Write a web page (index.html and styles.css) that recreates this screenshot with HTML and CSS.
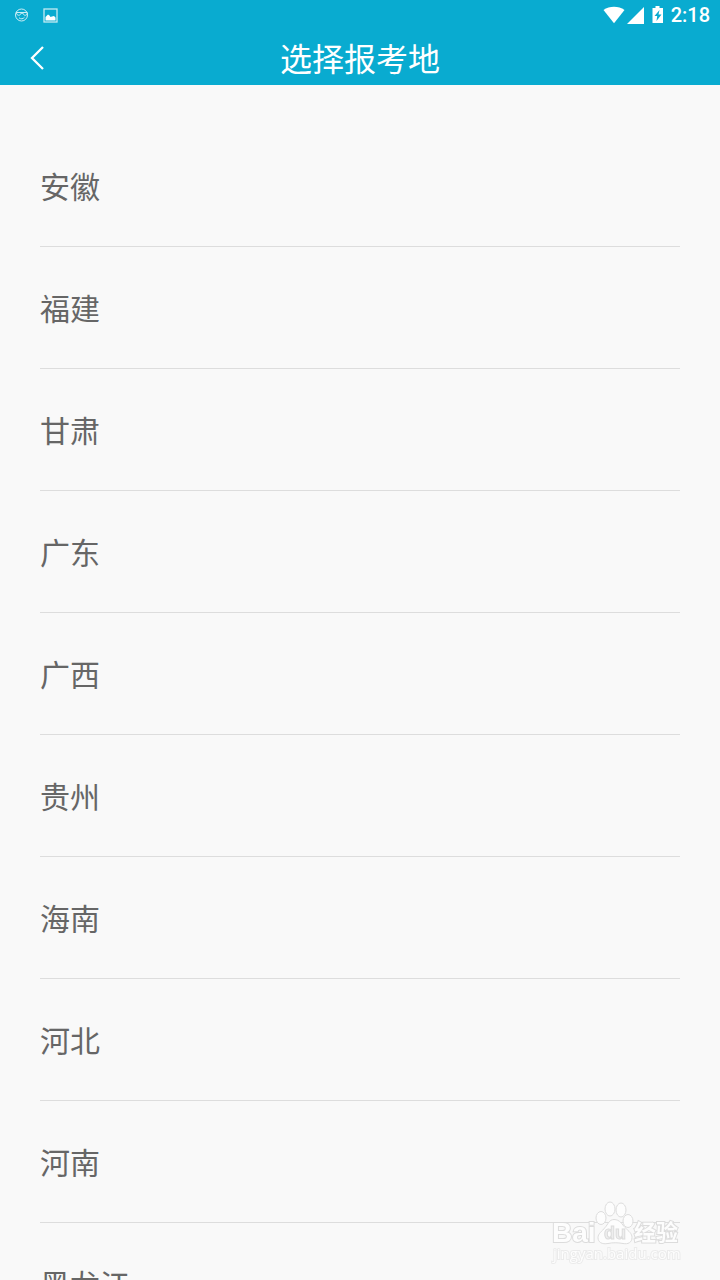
FILE: index.html
```html
<!DOCTYPE html>
<html lang="zh-CN">

<head>
    <meta charset="UTF-8">
    <meta name="viewport" content="width=device-width, initial-scale=1.0">
    <title>选择报考地</title>
    <link rel="stylesheet" href="styles.css">
</head>

<body>
    <header class="top">
        <div class="status-bar">
            <div class="status-left">
                <svg class="status-face" width="14" height="14" viewBox="0 0 14 14" fill="none" stroke="#fff">
                    <circle cx="6.5" cy="7" r="6" />
                    <path d="M1 4.5h11.5M1.5 5c.3 3 4 3 4.5.2h2c.5 2.8 4 2.8 4.5-.2M4 9.8c2 1.6 4 1.3 5.5-.6" />
                </svg>
                <svg width="16" height="16" viewBox="0 0 16 16">
                    <rect x="1" y="2" width="13" height="13" fill="none" stroke="#c4eaf2" stroke-width="1.3" />
                    <path d="M2.5 13.5V10L4 8.5l1-1 1.5 1 1 1.5L9 9.5l2-.5 1.5 1.5v3z" fill="#fff" />
                </svg>
            </div>
            <div class="status-right">
                <svg width="22" height="18" viewBox="0 0 22 18">
                    <path d="M.5 4C6.5-.3 15.5-.3 21.5 4L11 17.3z" fill="#fff" />
                </svg>
                <svg class="signal" width="17" height="17" viewBox="0 0 17 17">
                    <path d="M17 0v17H0z" fill="#fff" />
                </svg>
                <svg class="battery" width="12" height="18" viewBox="0 0 12 18">
                    <path d="M3.5 0h4v2H11v15H.5V2h3z" fill="#fff" />
                    <path d="M7.5 4L2.5 10h2.7L4.5 15l5-6.5h-3z" fill="#09abd0" />
                </svg>
                <span class="clock">2:18</span>
            </div>
        </div>
        <nav class="title-bar">
            <button class="back" type="button" aria-label="返回">
                <svg width="14" height="24" viewBox="0 0 14 24" fill="none" stroke="#fff" stroke-width="2.3">
                    <path d="M13 1L2 12l11 11" />
                </svg>
            </button>
            <h1>选择报考地</h1>
        </nav>
    </header>

    <main>
        <ul class="province-list">
            <li><a href="#anhui">安徽</a></li>
            <li><a href="#fujian">福建</a></li>
            <li><a href="#gansu">甘肃</a></li>
            <li><a href="#guangdong">广东</a></li>
            <li><a href="#guangxi">广西</a></li>
            <li><a href="#guizhou">贵州</a></li>
            <li><a href="#hainan">海南</a></li>
            <li><a href="#hebei">河北</a></li>
            <li><a href="#henan">河南</a></li>
            <li><a href="#heilongjiang">黑龙江</a></li>
        </ul>
    </main>

    <svg class="watermark" width="132" height="66" viewBox="0 0 132 66">
        <ellipse cx="51" cy="18" rx="5" ry="6.5" />
        <ellipse cx="60" cy="9" rx="5" ry="7" />
        <ellipse cx="71" cy="10" rx="5" ry="7" />
        <ellipse cx="78" cy="21" rx="5" ry="6.5" />
        <path d="M64 19.5c6 0 8 5 11 8 4 4 7 6 7 10 0 5-4 7-9 6-6-1-10-1-15 0-6 1-10-1-10-6 0-4 4-6 7-10 3-3 4-8 9-8z" />
        <text class="brand" x="2" y="42">Bai</text>
        <text class="du" x="54" y="39">du</text>
        <text class="cn" x="84" y="40">经验</text>
        <text class="url" x="3" y="59">jingyan.baidu.com</text>
    </svg>
</body>

</html>
```

FILE: styles.css
```css
* {
    box-sizing: border-box;
}

body {
    margin: 0;
    height: 100vh;
    display: flex;
    flex-direction: column;
    overflow: hidden;
    background: #f9f9f9;
    color: #666;
    font-family: Roboto, "Noto Sans CJK SC", sans-serif;
}

svg {
    display: block;
}

.top {
    flex: none;
    background: #09abd0;
    color: #fff;
}

.status-bar {
    display: flex;
    justify-content: space-between;
    height: 30px;
    padding: 0 10px 0 15px;
}

.status-left,
.status-right {
    display: flex;
    align-items: center;
}

.status-left {
    gap: 14px;
}

.status-face {
    opacity: 0.8;
}

.signal {
    margin-left: 2px;
}

.battery {
    margin: 0 7px 0 8px;
}

.clock {
    font-size: 20px;
    font-weight: 500;
    line-height: 30px;
}

.title-bar {
    display: grid;
    grid-template-columns: 80px 1fr 80px;
    align-items: center;
    height: 55px;
}

.back {
    width: 80px;
    height: 55px;
    padding: 0 30px;
    border: 0;
    background: none;
    color: inherit;
}

h1 {
    margin: 0;
    padding-top: 6px;
    font-size: 32px;
    font-weight: 400;
    line-height: 49px;
    text-align: center;
}

main {
    flex: 1;
    min-height: 0;
    padding: 40px 40px 0;
    overflow: hidden;
}

.province-list {
    margin: 0;
    padding: 0;
    list-style: none;
}

.province-list li {
    border-bottom: 1px solid #ddd;
}

.province-list a {
    display: block;
    padding-top: 4px;
    color: inherit;
    font-size: 30px;
    line-height: 117px;
    text-decoration: none;
}

.watermark {
    position: fixed;
    right: 38px;
    bottom: 14px;
    fill: #fdfdfd;
    stroke: #dcdcdc;
    stroke-width: 1px;
    font-family: "Liberation Sans", "Noto Sans CJK SC", sans-serif;
}

.brand,
.cn,
.url {
    stroke-width: 2px;
    paint-order: stroke;
}

.brand {
    font-size: 28px;
    font-weight: 700;
}

.du {
    fill: #eee;
    font-size: 18px;
    font-weight: 700;
}

.cn {
    font-size: 22px;
    font-weight: 700;
}

.url {
    font-family: "Open Sans", sans-serif;
    font-size: 15px;
    stroke: #ebebeb;
}
```
